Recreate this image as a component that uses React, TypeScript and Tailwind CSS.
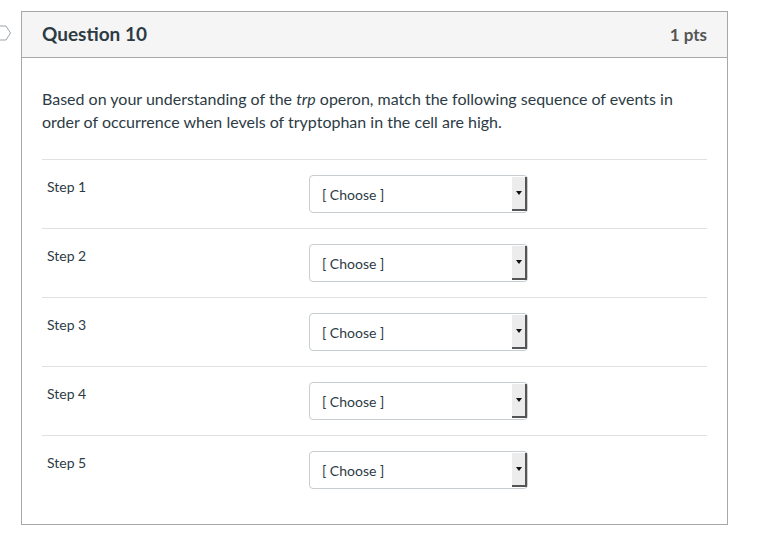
import React from "react";

const steps = ["Step 1", "Step 2", "Step 3", "Step 4", "Step 5"];

function ChooseSelect() {
  return (
    <div className="flex h-[38px] w-[219px] items-stretch rounded-[4px] border border-[#c7cdd1] bg-white">
      <div className="flex flex-1 items-center pl-[12px] text-[14px] text-[#2d3b45]">[ Choose ]</div>
      <div className="my-[1px] flex w-[15px] items-center justify-center border-b-2 border-r-2 border-[#555] bg-[#ececec]">
        <svg width="6" height="4" viewBox="0 0 6 4">
          <path d="M0 0 L6 0 L3 4 Z" fill="#111" />
        </svg>
      </div>
    </div>
  );
}

export default function App() {
  return (
    <div className="relative h-[548px] w-[757px] bg-white font-['Lato','Noto_Sans',sans-serif] text-[#2d3b45]">
      {/* flag marker next to the question */}
      <svg className="absolute left-[-2px] top-[25px]" width="14" height="16" viewBox="0 0 14 16">
        <path d="M0 1 L8 1 L12.5 8 L8 15 L0 15" fill="none" stroke="#9aa5ad" strokeWidth="1" />
      </svg>
      <div className="pl-[21px] pt-[11px]">
        <div className="w-[707px] border border-[#a8a8a8] bg-white">
          <div className="flex h-[46px] items-center justify-between border-b border-[#a8a8a8] bg-[#f5f5f5] pl-[20px] pr-[20px]">
            <span className="text-[19px] font-bold text-[#2d3b45]">Question 10</span>
            <span className="text-[17px] font-bold text-[#555]">1 pts</span>
          </div>
          <div className="px-[20px] pb-[20px] pt-[29px]">
            <p className="text-[16px] leading-[23px] text-[#2d3b45]">
              Based on your understanding of the <em>trp</em> operon, match the following sequence of events in order of occurrence when levels of tryptophan in the cell are high.
            </p>
            <div className="mt-[26px]">
              {steps.map((s) => (
                <div key={s} className="flex border-t border-[#e0e0e0] py-[15px]">
                  <div className="w-[267px] pl-[5px] pt-[4px] text-[14px] leading-[16px]">{s}</div>
                  <ChooseSelect />
                </div>
              ))}
            </div>
          </div>
        </div>
      </div>
    </div>
  );
}
